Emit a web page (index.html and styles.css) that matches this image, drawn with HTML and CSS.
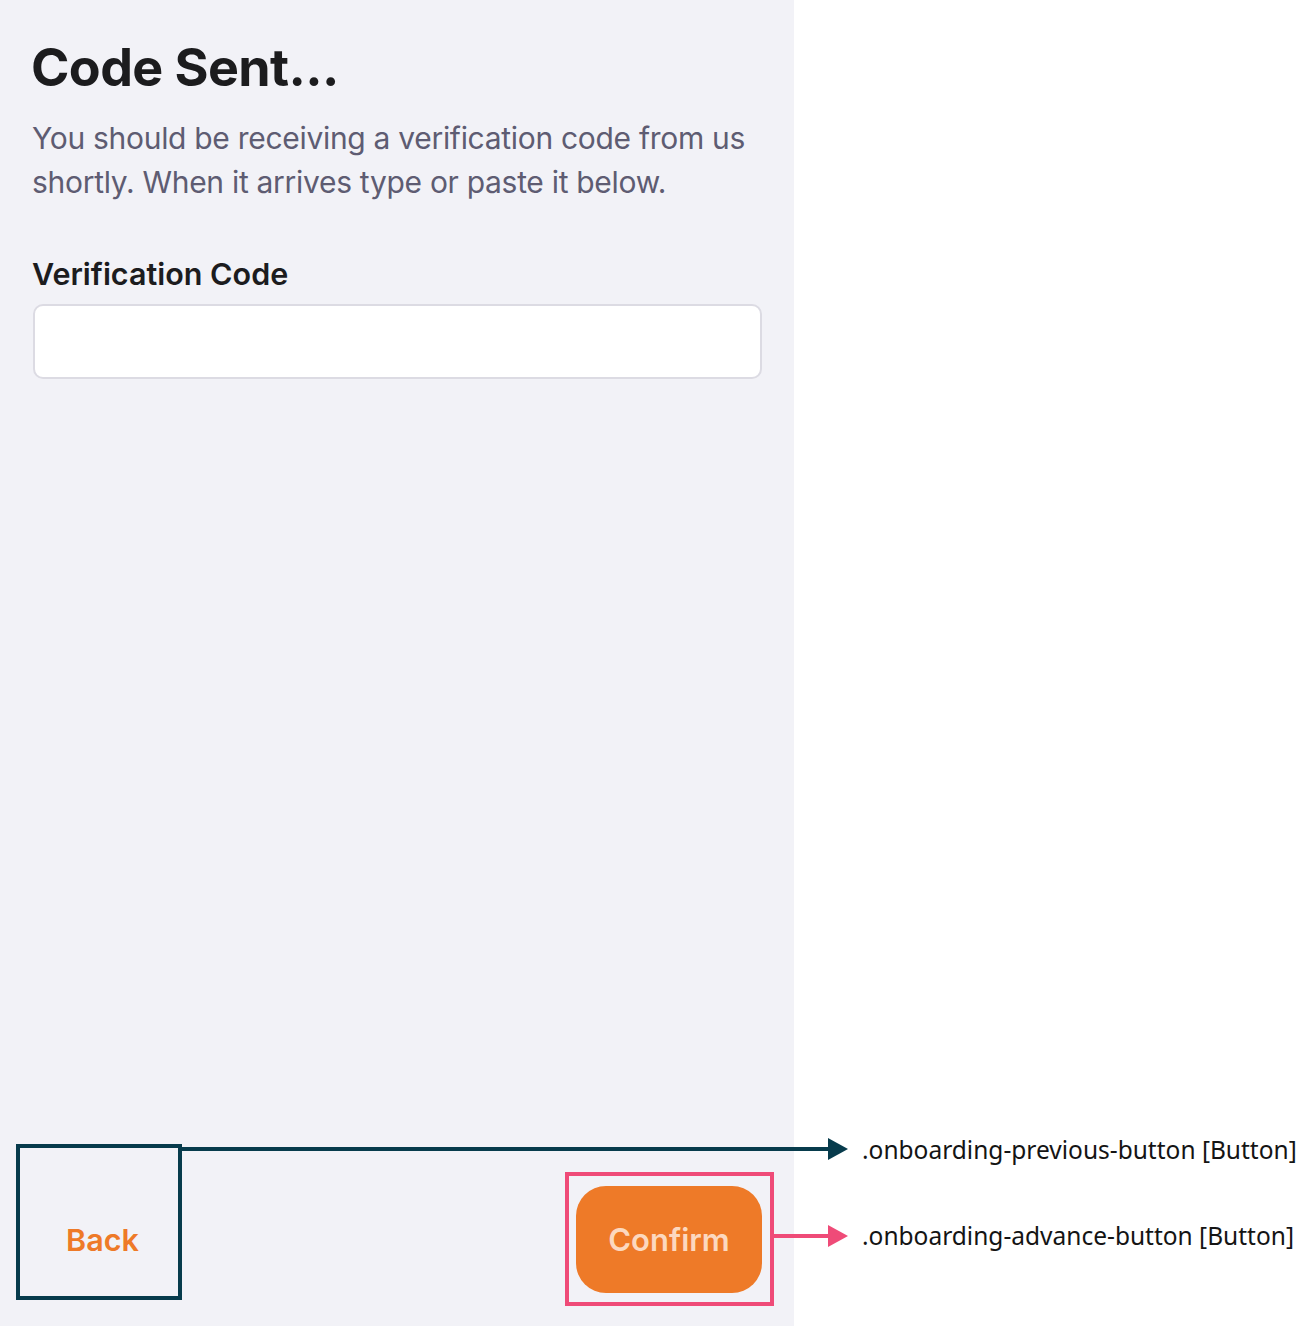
FILE: index.html
```html
<!DOCTYPE html>
<html>
<head>
<meta charset="utf-8">
<link rel="stylesheet" href="styles.css">
</head>
<body>
<div class="page">
  <main class="panel">
    <section class="content">
      <h1 class="title">Code Sent...</h1>
      <p class="lead">You should be receiving a verification code from us shortly. When it arrives type or paste it below.</p>
      <label class="field-label" for="code">Verification Code</label>
      <input class="field-input" id="code" type="text">
    </section>
    <footer class="actions">
      <button class="btn-back">Back</button>
      <button class="btn-confirm">Confirm</button>
    </footer>
  </main>
  <div class="annot annot-prev">
    <div class="annot-box box-prev"></div>
    <div class="annot-line line-prev"></div>
    <div class="annot-head head-prev"></div>
    <span class="annot-text text-prev">.onboarding-previous-button [Button]</span>
  </div>
  <div class="annot annot-adv">
    <div class="annot-box box-adv"></div>
    <div class="annot-line line-adv"></div>
    <div class="annot-head head-adv"></div>
    <span class="annot-text text-adv">.onboarding-advance-button [Button]</span>
  </div>
</div>
</body>
</html>
```

FILE: styles.css
```css
* { box-sizing: border-box; }
html, body { margin: 0; padding: 0; background: #ffffff; }
.page { position: relative; width: 1298px; height: 1326px; overflow: hidden; }
.panel {
  width: 794px;
  height: 1326px;
  background: #f2f2f7;
  display: flex;
  flex-direction: column;
  justify-content: space-between;
  font-family: Inter, "Noto Sans", sans-serif;
}
.content { padding: 36px 33px 0 32px; display: flex; flex-direction: column; }
.title {
  margin: 0 0 0 -1px;
  font-size: 52px;
  font-weight: 700;
  letter-spacing: -0.6px;
  color: #1c1c1e;
  line-height: 64px;
}
.lead {
  margin: 16px 0 0 0;
  font-size: 30px;
  line-height: 44px;
  color: #5e5c72;
  letter-spacing: -0.3px;
  max-width: 728px;
}
.field-label {
  margin-top: 52px;
  font-size: 30.5px;
  font-weight: 600;
  line-height: 36px;
  color: #1c1c1e;
  letter-spacing: 0;
}
.field-input {
  margin-top: 12px;
  margin-left: 1px;
  width: 729px;
  height: 75px;
  border: 2px solid #dcdbe3;
  border-radius: 10px;
  background: #ffffff;
  font-size: 30px;
  padding: 0 16px;
  outline: none;
}
.actions {
  display: flex;
  justify-content: space-between;
  align-items: center;
  padding: 0 32px 33px 24px;
}
.btn-back {
  width: 157px;
  height: 107px;
  border: 0;
  background: transparent;
  color: #ee7a28;
  font-family: Inter, sans-serif;
  font-size: 30.5px;
  font-weight: 600;
  letter-spacing: 0;
  padding: 0;
}
.btn-confirm {
  width: 186px;
  height: 107px;
  border: 0;
  border-radius: 30px;
  background: #ee7a28;
  color: #fcd8bf;
  font-family: Inter, sans-serif;
  font-size: 31px;
  font-weight: 600;
  letter-spacing: 0;
  padding: 0;
}
.annot { position: absolute; left: 0; top: 0; }
.annot-box { position: absolute; }
.box-prev { left: 16px; top: 1144px; width: 166px; height: 156px; border: 4px solid #073b4c; }
.box-adv { left: 565px; top: 1172px; width: 209px; height: 134px; border: 4px solid #ef4b78; }
.annot-line { position: absolute; height: 4px; }
.line-prev { left: 180px; top: 1147px; width: 650px; background: #073b4c; }
.line-adv { left: 772px; top: 1234px; width: 58px; background: #ef4b78; }
.annot-head {
  position: absolute;
  width: 0; height: 0;
  border-top: 11px solid transparent;
  border-bottom: 11px solid transparent;
}
.head-prev { left: 828px; top: 1138px; border-left: 20px solid #073b4c; }
.head-adv { left: 828px; top: 1225px; border-left: 20px solid #ef4b78; }
.annot-text {
  position: absolute;
  left: 862px;
  font-family: "Noto Sans", "Open Sans", sans-serif;
  font-size: 24.5px;
  color: #141414;
  white-space: nowrap;
  line-height: 30px;
}
.text-prev { top: 1135px; }
.text-adv { top: 1221px; }
```
